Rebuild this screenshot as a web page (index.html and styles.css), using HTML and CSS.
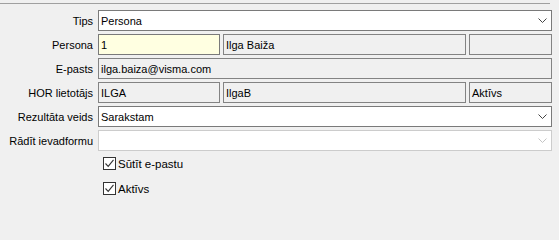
FILE: index.html
```html
<!DOCTYPE html>
<html>
<head>
<meta charset="utf-8">
<link rel="stylesheet" href="styles.css">
</head>
<body>
<div class="topline"></div>
<div class="form">
  <div class="lbl">Tips</div>
  <div class="box select">
    <span class="val">Persona</span>
    <svg class="chev" width="9" height="5" viewBox="0 0 9 5"><path d="M0.5 0.5 L4.5 4.5 L8.5 0.5" fill="none" stroke="#444" stroke-width="1"/></svg>
  </div>

  <div class="lbl">Persona</div>
  <div class="split">
    <div class="box edit yellow w1"><span class="val">1</span></div>
    <div class="box ro w2"><span class="val">Ilga Baiža</span></div>
    <div class="box ro w3"></div>
  </div>

  <div class="lbl">E-pasts</div>
  <div class="box ro"><span class="val">ilga.baiza@visma.com</span></div>

  <div class="lbl">HOR lietotājs</div>
  <div class="split">
    <div class="box ro w1"><span class="val">ILGA</span></div>
    <div class="box ro w2"><span class="val">IlgaB</span></div>
    <div class="box ro w3"><span class="val">Aktīvs</span></div>
  </div>

  <div class="lbl">Rezultāta veids</div>
  <div class="box select">
    <span class="val">Sarakstam</span>
    <svg class="chev" width="9" height="5" viewBox="0 0 9 5"><path d="M0.5 0.5 L4.5 4.5 L8.5 0.5" fill="none" stroke="#444" stroke-width="1"/></svg>
  </div>

  <div class="lbl">Rādīt ievadformu</div>
  <div class="box select disabled">
    <span class="val"></span>
    <svg class="chev" width="9" height="5" viewBox="0 0 9 5"><path d="M0.5 0.5 L4.5 4.5 L8.5 0.5" fill="none" stroke="#c4c4c4" stroke-width="1"/></svg>
  </div>

  <div class="lbl"></div>
  <div class="checks">
    <div class="check">
      <span class="cb"><svg width="11" height="11" viewBox="0 0 11 11"><path d="M1.5 5.5 L4.2 8.3 L9.5 1.8" fill="none" stroke="#333" stroke-width="1.1"/></svg></span>
      <span class="ctext">Sūtīt e-pastu</span>
    </div>
    <div class="check">
      <span class="cb"><svg width="11" height="11" viewBox="0 0 11 11"><path d="M1.5 5.5 L4.2 8.3 L9.5 1.8" fill="none" stroke="#333" stroke-width="1.1"/></svg></span>
      <span class="ctext">Aktīvs</span>
    </div>
  </div>
</div>
</body>
</html>
```

FILE: styles.css
```css
html, body {
  margin: 0;
  padding: 0;
  background: #f0f0f0;
}
body {
  font-family: "Liberation Sans", Arial, sans-serif;
  font-size: 11px;
  color: #000;
  width: 559px;
  height: 203px;
  overflow: hidden;
}
.topline {
  margin-top: 3px;
  width: 550px;
  border-top: 1px solid #a0a0a0;
}
.form {
  margin-top: 6px;
  display: grid;
  grid-template-columns: 93px 454px;
  column-gap: 5px;
  row-gap: 3px;
  grid-auto-rows: 21px;
}
.lbl {
  display: flex;
  align-items: center;
  justify-content: flex-end;
  white-space: nowrap;
}
.box {
  box-sizing: border-box;
  height: 21px;
  border: 1px solid #7a7a7a;
  display: flex;
  align-items: center;
  padding: 0 2px;
  white-space: nowrap;
  overflow: hidden;
}
.box .val {
  flex: 1;
}
.select {
  background: #fff;
  padding-right: 4px;
}
.select.disabled {
  border-color: #cccccc;
}
.chev {
  flex: none;
}
.yellow {
  background: #ffffe1;
}
.ro {
  background: #f0f0f0;
  border-color: #838383;
}
.split {
  display: flex;
  gap: 3px;
}
.w1 { width: 122px; }
.w2 { width: 243px; }
.w3 { flex: 1; }
.checks {
  grid-row: span 2;
  display: flex;
  flex-direction: column;
  gap: 12px;
  padding-top: 3px;
  padding-left: 5px;
}
.check {
  display: flex;
  align-items: center;
  gap: 2px;
  height: 13px;
}
.cb {
  box-sizing: border-box;
  width: 13px;
  height: 13px;
  border: 1px solid #333;
  background: #fff;
  display: flex;
  align-items: center;
  justify-content: center;
}
.ctext {
  font-size: 11.5px;
}
```
